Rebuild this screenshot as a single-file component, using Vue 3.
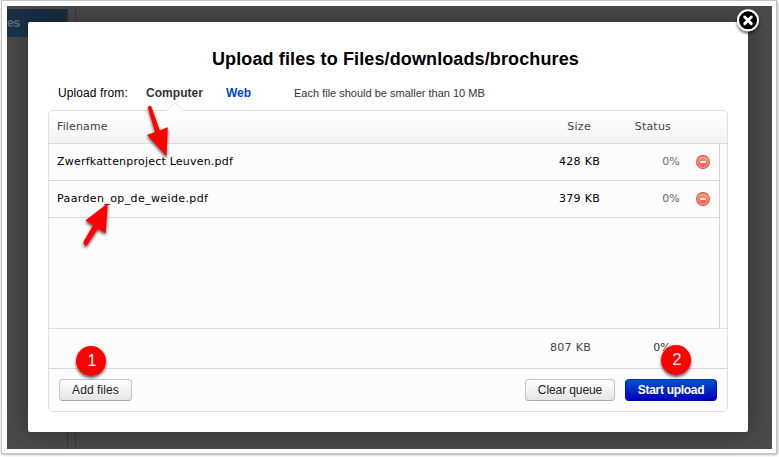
<script setup>
const files = [
  { name: 'Zwerfkattenproject Leuven.pdf', size: '428 KB', status: '0%', cls: 'first' },
  { name: 'Paarden_op_de_weide.pdf', size: '379 KB', status: '0%', cls: 'second' },
]
</script>

<template>
  <div class="frame">
    <div class="backdrop">
      <div class="side"><div class="side-tab">es</div></div>
      <div class="page"></div>
    </div>
    <section class="modal">
      <h1><span>Upload files to Files/downloads/brochures</span></h1>
      <nav class="tabs">
        <span class="from">Upload from:</span>
        <span class="tab">Computer</span>
        <a class="web">Web</a>
        <span class="hint">Each file should be smaller than 10 MB</span>
      </nav>
      <div class="panel">
        <svg class="notch" width="18" height="9" viewBox="0 0 18 9">
          <path d="M0 9 L9 .8 L18 9" fill="#fff" stroke="#e2e2e2" />
        </svg>
        <div class="row head">
          <span class="name">Filename</span><span class="size">Size</span><span class="status">Status</span>
        </div>
        <div class="body">
          <div v-for="f in files" :key="f.name" class="row file" :class="f.cls">
            <span class="name">{{ f.name }}</span>
            <span class="size">{{ f.size }}</span>
            <span class="status">{{ f.status }}</span>
            <svg class="remove" width="14" height="14" viewBox="0 0 14 14">
              <defs>
                <linearGradient id="red" x1="0" y1="0" x2="0" y2="1">
                  <stop offset="0" stop-color="#f9a183" />
                  <stop offset=".5" stop-color="#fa7557" />
                  <stop offset="1" stop-color="#ff5a50" />
                </linearGradient>
              </defs>
              <circle cx="7" cy="7" r="6.4" fill="#fbb09c" stroke="#d0523f" stroke-width="1.1" />
              <circle cx="7" cy="7" r="5" fill="url(#red)" />
              <rect x="4" y="6" width="6" height="2" fill="#fff" />
            </svg>
          </div>
        </div>
        <div class="row total">
          <span class="name"></span><span class="size">807 KB</span><span class="status">0%</span>
        </div>
        <div class="actions">
          <button class="add">Add files</button>
          <button class="clear">Clear queue</button>
          <button class="start">Start upload</button>
        </div>
      </div>
    </section>
    <svg class="overlay" width="779" height="457" viewBox="0 0 779 457">
      <defs>
        <filter id="shade" x="-50%" y="-50%" width="200%" height="200%">
          <feDropShadow dx="0" dy="2" stdDeviation="1.8" flood-color="#000" flood-opacity=".65" />
        </filter>
      </defs>
      <g filter="url(#shade)">
        <circle cx="748" cy="20.3" r="10" fill="#000" stroke="#fff" stroke-width="2" />
        <path d="M744.7 17 L751.3 23.6 M751.3 17 L744.7 23.6" stroke="#fff" stroke-width="2.9" stroke-linecap="round" />
      </g>
      <g fill="#f00" filter="url(#shade)">
        <path d="M147.8 107.5 Q149 105 151.2 106.3 L159.8 130.2 L167.8 127.3 L166.5 156.5 L147 135 L155 132 Z" />
        <path d="M84 244.5 Q82.8 242 84.2 240.5 L93 225.5 L85.4 220.5 L107.8 203.2 L105.7 233.2 L97.8 228.8 L87.5 244.5 Q85.5 246.5 84 244.5 Z" />
        <circle cx="91" cy="361" r="15" />
        <circle cx="676" cy="360" r="15" />
      </g>
    </svg>
    <span class="badge one">1</span>
    <span class="badge two">2</span>
  </div>
</template>

<style>
body { background: #fff; overflow: hidden; }
</style>

<style scoped>
* { box-sizing: border-box; }
.frame { position: relative; width: 779px; height: 457px; padding: 6px 7px 8px; font-family: "Liberation Sans", Arial, sans-serif; }
.frame::before { content: ""; position: absolute; left: 2px; top: 1px; width: 774px; height: 452px; background: #fff; box-shadow: 0 0 1px 1px #c4c4c4, 1px 1px 3px #777; }
.backdrop { position: relative; display: flex; width: 765px; height: 443px; background: #4a4a4a; overflow: hidden; }
.side { width: 61px; padding-top: 3px; border-right: 1px solid #393939; }
.side-tab { width: 60px; height: 28px; background: linear-gradient(#192d40, #19354f); color: #5d6a76; font-size: 12.5px; font-weight: bold; line-height: 29px; letter-spacing: -.6px; }
.page { width: 696px; margin-left: 7px; border-left: 1px solid #3b3b3b; }
.modal { position: absolute; left: 28px; top: 22px; width: 720px; height: 410px; padding: 23px 20px 0; background: #fff; border-radius: 2px; box-shadow: 0 0 24px rgba(0,0,0,.38); clip-path: inset(-16px -24px -17px -21px); }
h1 { display: flex; justify-content: center; margin: 0; height: 28px; padding-left: 15px; font-size: 18px; line-height: 28px; color: #000; white-space: nowrap; }
h1 span { width: 367px; letter-spacing: .12px; }
.tabs { display: flex; height: 37px; padding: 10px 0 0 10px; line-height: 20px; font-size: 12px; white-space: nowrap; }
.from { width: 88px; color: #000; letter-spacing: .1px; }
.tab { width: 80px; color: #333; font-weight: bold; letter-spacing: .05px; }
.web { width: 68px; color: #0645c8; font-weight: bold; }
.hint { color: #333; font-size: 11px; line-height: 21px; }
.panel { position: relative; width: 680px; height: 302px; border: 1px solid #e0e0e0; border-radius: 5px; background: #fcfcfc; font-family: "DejaVu Sans", Verdana, sans-serif; font-size: 11px; }
.notch { position: absolute; left: 117px; top: -9px; display: block; }
.row { display: flex; align-items: center; white-space: nowrap; }
.name { width: 442px; padding-left: 8px; }
.size { width: 100px; text-align: right; letter-spacing: .3px; }
.status { width: 80px; text-align: right; letter-spacing: .2px; }
.head { height: 33px; border-bottom: 1px solid #ddd; background: linear-gradient(#fff, #f3f3f3); color: #444; border-radius: 5px 5px 0 0; padding-bottom: 1px; }
.head .name { letter-spacing: .13px; }
.body { width: 671px; height: 184px; border-right: 1px solid #d5d5d5; }
.file { height: 37px; border-bottom: 1px solid #d9d9d9; color: #000; }
.file span { padding-bottom: 2px; }
.first .name { letter-spacing: .21px; }
.second .name { letter-spacing: .38px; }
.file .size { width: 109px; }
.file .status { color: #666; }
.remove { margin-left: 16px; }
.total { height: 41px; padding-bottom: 3px; border-top: 1px solid #e0e0e0; border-bottom: 1px solid #d8d8d8; color: #444; }
.total .status { color: #333; }
.actions { display: flex; padding: 10px 10px 0; }
button { height: 22px; padding: 0; border: 1px solid #c4c4c4; border-bottom-color: #a9a9a9; border-radius: 4px; background: linear-gradient(#fff, #e5e5e5); color: #222; font: 12px/20px "Liberation Sans", Arial, sans-serif; white-space: nowrap; }
.add { width: 73px; letter-spacing: .1px; }
.clear { width: 90px; margin-left: auto; letter-spacing: -.1px; }
.start { width: 92px; margin-left: 10px; border-color: #003da8 #0010b0 #0000a0; background: linear-gradient(#0050cc, #0000bd); color: #fff; font-weight: bold; letter-spacing: -.3px; }
.overlay { position: absolute; left: 0; top: 0; }
.badge { position: absolute; width: 30px; height: 30px; color: #fff; font-size: 16px; line-height: 30px; text-align: center; }
.one { left: 77px; top: 346px; }
.two { left: 662px; top: 345px; }
</style>
